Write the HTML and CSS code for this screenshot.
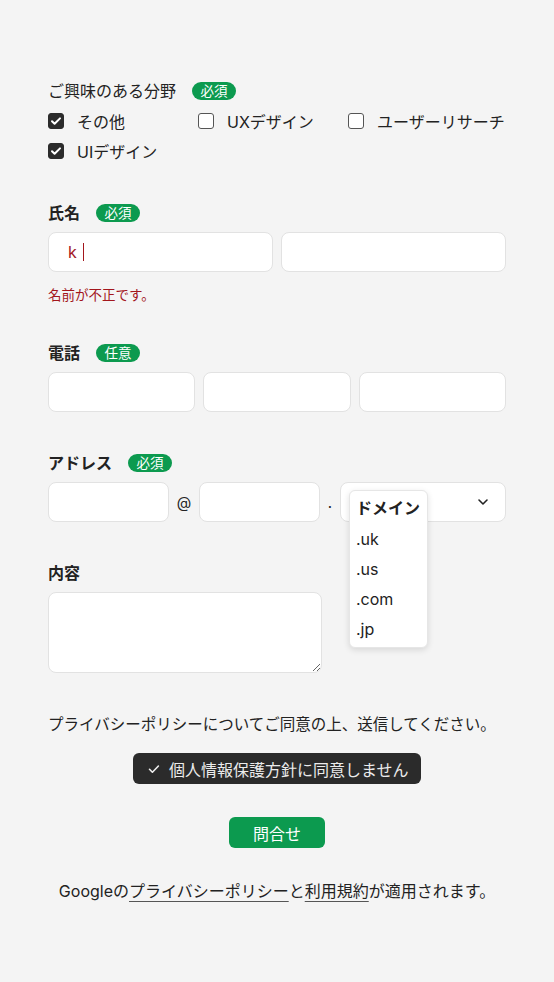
FILE: index.html
```html
<!DOCTYPE html>
<html lang="ja">
<head>
    <meta charset="UTF-8">
    <meta name="viewport" content="width=device-width, initial-scale=1.0">
    <title>お問い合わせ</title>
    <link rel="stylesheet" href="styles.css">
</head>
<body>
    <form class="contact">
        <div class="field field-interest">
            <div class="field-label light">ご興味のある分野 <span class="badge">必須</span></div>
            <div class="checks">
                <label class="check"><span class="box on"><svg viewBox="0 0 16 16" width="16" height="16"><path d="M4 8.2l2.6 2.6L12 5.4" fill="none" stroke="#fff" stroke-width="2" stroke-linecap="round" stroke-linejoin="round"/></svg></span>その他</label>
                <label class="check"><span class="box"></span>UXデザイン</label>
                <label class="check"><span class="box"></span>ユーザーリサーチ</label>
                <label class="check"><span class="box on"><svg viewBox="0 0 16 16" width="16" height="16"><path d="M4 8.2l2.6 2.6L12 5.4" fill="none" stroke="#fff" stroke-width="2" stroke-linecap="round" stroke-linejoin="round"/></svg></span>UIデザイン</label>
            </div>
        </div>

        <div class="field field-name">
            <div class="field-label">氏名 <span class="badge">必須</span></div>
            <div class="row row-2">
                <div class="input-wrap">
                    <input type="text" class="input invalid" value="k">
                    <span class="caret"></span>
                </div>
                <input type="text" class="input">
            </div>
            <div class="error">名前が不正です。</div>
        </div>

        <div class="field">
            <div class="field-label">電話 <span class="badge">任意</span></div>
            <div class="row row-3">
                <input type="tel" class="input">
                <input type="tel" class="input">
                <input type="tel" class="input">
            </div>
        </div>

        <div class="field">
            <div class="field-label">アドレス <span class="badge">必須</span></div>
            <div class="row-mail">
                <input type="text" class="input">
                <span class="sep">@</span>
                <input type="text" class="input">
                <span class="sep dot">.</span>
                <div class="select">
                    <svg class="chevron" viewBox="0 0 12 8" width="12" height="8"><path d="M2 2l4 4 4-4" fill="none" stroke="#222" stroke-width="1.6" stroke-linecap="round" stroke-linejoin="round"/></svg>
                    <ul class="menu">
                        <li class="menu-head">ドメイン</li>
                        <li>.uk</li>
                        <li>.us</li>
                        <li>.com</li>
                        <li>.jp</li>
                    </ul>
                </div>
            </div>
        </div>

        <div class="field field-body">
            <div class="field-label">内容</div>
            <textarea class="textarea"></textarea>
        </div>

        <p class="notice">プライバシーポリシーについてご同意の上、送信してください。</p>

        <div class="agree-row">
            <div class="agree">
                <svg viewBox="0 0 14 14" width="14" height="14"><path d="M2.5 7.3l2.9 2.9 6-6.2" fill="none" stroke="#eee" stroke-width="1.6" stroke-linecap="round" stroke-linejoin="round"/></svg>
                個人情報保護方針に同意しません
            </div>
        </div>

        <div class="submit-row">
            <button type="submit" class="submit">問合せ</button>
        </div>

        <p class="footer">Googleの<a href="#">プライバシーポリシー</a>と<a href="#">利用規約</a>が適用されます。</p>
    </form>
</body>
</html>
```

FILE: styles.css
```css
html, body {
    margin: 0;
    padding: 0;
}

body {
    background: #f4f4f4;
    color: #222;
    font-family: Inter, "Noto Sans CJK JP", sans-serif;
    font-size: 16px;
}

.contact {
    padding: 79px 48px 0;
    width: 458px;
}

.field {
    margin-bottom: 39px;
}

.field-interest {
    margin-bottom: 35px;
}

.field-name {
    margin-bottom: 36px;
}

.field-label {
    display: flex;
    align-items: center;
    height: 24px;
    line-height: 24px;
    font-weight: 700;
    margin-bottom: 7px;
}

.field-label.light {
    font-weight: 400;
    margin-bottom: 3px;
}

.badge {
    display: inline-block;
    margin-left: 16px;
    width: 44px;
    height: 18px;
    line-height: 18px;
    border-radius: 9px;
    background: #0c9a4f;
    color: #fff;
    font-size: 13.5px;
    font-weight: 400;
    text-align: center;
}

/* checkboxes */
.checks {
    display: grid;
    grid-template-columns: 150px 150px 158px;
}

.check {
    display: flex;
    align-items: center;
    height: 30px;
    white-space: nowrap;
}

.box {
    width: 14px;
    height: 14px;
    border: 1px solid #555;
    border-radius: 3px;
    background: #fff;
    margin-right: 13px;
    position: relative;
    flex: none;
}

.box.on {
    background: #2b2b2b;
    border-color: #2b2b2b;
}

.box svg {
    position: absolute;
    left: -1px;
    top: -1px;
}

/* inputs */
.row {
    display: grid;
    gap: 8px;
}

.row-2 {
    grid-template-columns: 1fr 1fr;
}

.row-3 {
    grid-template-columns: 1fr 1fr 1fr;
}

.input {
    box-sizing: border-box;
    width: 100%;
    height: 40px;
    border: 1px solid #e2e2e2;
    border-radius: 8px;
    background: #fff;
    font: inherit;
    color: #222;
    padding: 0 19px;
    min-width: 0;
    outline: none;
}

.input.invalid {
    color: #a3161c;
}

.input-wrap {
    position: relative;
    min-width: 0;
}

.caret {
    position: absolute;
    left: 35px;
    top: 11px;
    width: 1px;
    height: 18px;
    background: #a3161c;
}

.error {
    margin-top: 13px;
    line-height: 20px;
    font-size: 13.5px;
    color: #a3161c;
}

.row-mail {
    display: flex;
    align-items: center;
}

.row-mail .input {
    flex: none;
    width: 121px;
}

.sep {
    width: 30px;
    text-align: center;
    font-size: 15px;
}

.sep.dot {
    width: 20px;
}

.select {
    position: relative;
    box-sizing: border-box;
    flex: 1;
    height: 40px;
    border: 1px solid #e2e2e2;
    border-radius: 8px;
    background: #fff;
}

.chevron {
    position: absolute;
    right: 16px;
    top: 15px;
}

.menu {
    position: absolute;
    left: 8px;
    top: 7px;
    list-style: none;
    margin: 0;
    padding: 2px 0 3px;
    width: 79px;
    box-sizing: border-box;
    background: #fff;
    border: 1px solid #e6e6e6;
    border-radius: 6px;
    box-shadow: 0 2px 6px rgba(0, 0, 0, 0.12);
    z-index: 2;
}

.menu li {
    height: 30px;
    line-height: 30px;
    padding: 0 6px;
}

.menu .menu-head {
    height: 31px;
    line-height: 31px;
    font-weight: 700;
}

.textarea {
    display: block;
    box-sizing: border-box;
    width: 274px;
    height: 81px;
    border: 1px solid #e2e2e2;
    border-radius: 8px;
    background: #fff;
    font: inherit;
    resize: both;
    outline: none;
}

.field-body {
    margin-bottom: 40px;
}

.notice {
    margin: 0;
    font-size: 15.5px;
    line-height: 24px;
}

.agree-row {
    display: flex;
    justify-content: center;
    margin-top: 16px;
}

.agree {
    display: flex;
    align-items: center;
    gap: 8px;
    box-sizing: border-box;
    width: 288px;
    height: 31px;
    padding-left: 14px;
    background: #2b2b2b;
    border-radius: 6px;
    color: #ebebeb;
}

.submit-row {
    display: flex;
    justify-content: center;
    margin-top: 33px;
}

.submit {
    width: 96px;
    height: 31px;
    border: none;
    border-radius: 6px;
    background: #0c9a4f;
    color: #fff;
    font: inherit;
}

.footer {
    margin: 31px 0 0;
    text-align: center;
    font-size: 16px;
    line-height: 24px;
}

.footer a {
    color: inherit;
    text-decoration: underline;
    text-decoration-color: #555;
    text-underline-offset: 4px;
}
```
